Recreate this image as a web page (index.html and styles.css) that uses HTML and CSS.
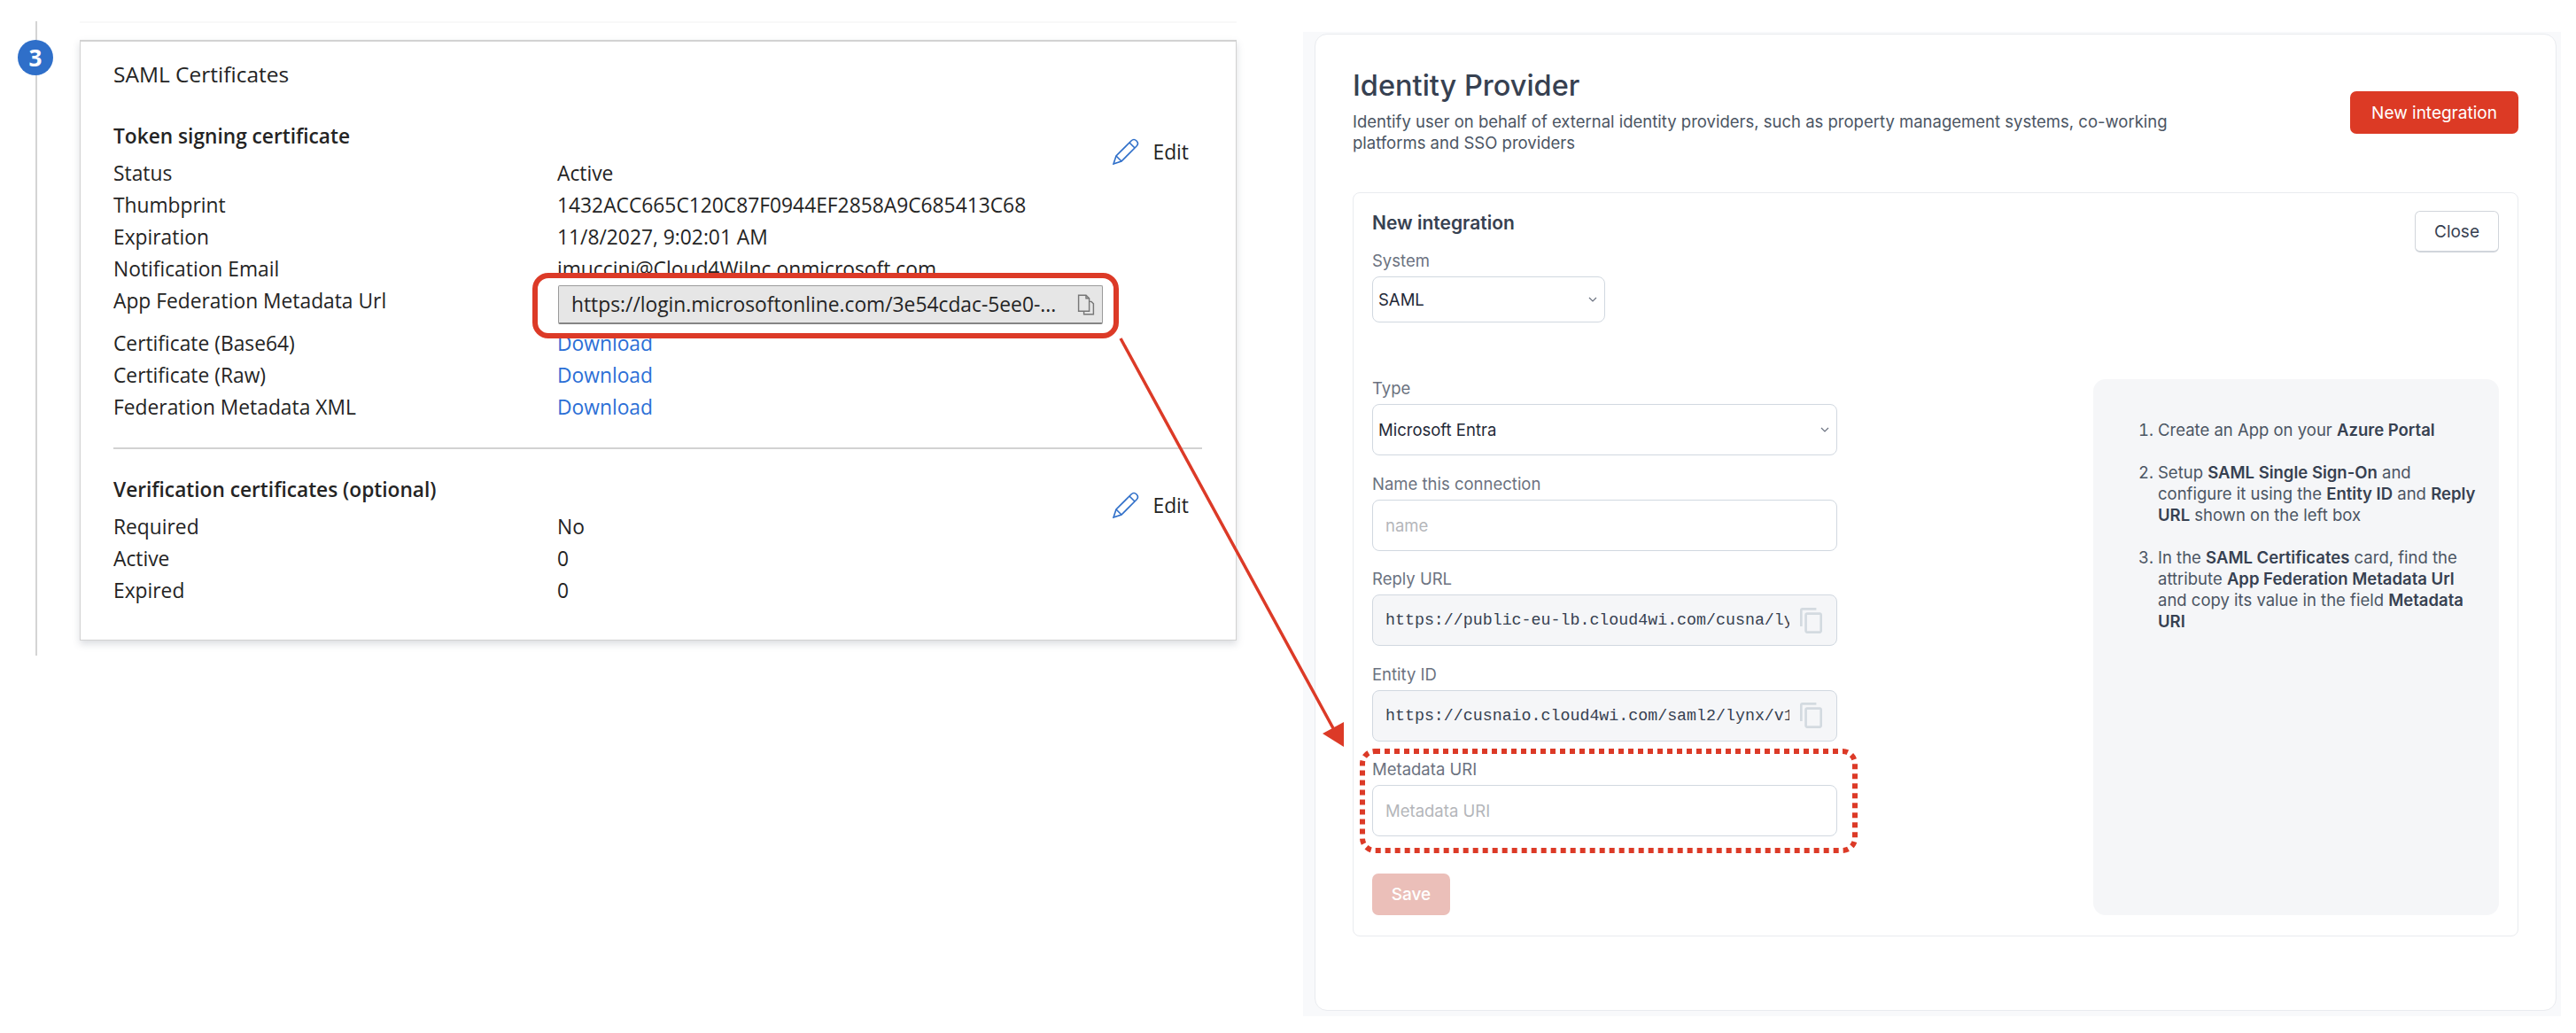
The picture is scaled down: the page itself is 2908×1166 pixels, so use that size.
FILE: index.html
```html
<!DOCTYPE html>
<html lang="en">
<head>
    <meta charset="UTF-8">
    <title>SAML setup - step 3</title>
    <link rel="stylesheet" href="styles.css">
</head>
<body>
    <div class="page">
        <!-- Left: Azure portal capture -->
        <section class="step">
            <span class="step-badge">3</span>
            <div class="step-rule"></div>
            <div class="azure-card">
                <h2 class="azure-title">SAML Certificates</h2>

                <div class="azure-section">
                    <div class="azure-main">
                        <h3 class="azure-heading">Token signing certificate</h3>
                        <div class="azure-rows">
                            <div>Status</div><div>Active</div>
                            <div>Thumbprint</div><div>1432ACC665C120C87F0944EF2858A9C685413C68</div>
                            <div>Expiration</div><div>11/8/2027, 9:02:01 AM</div>
                            <div>Notification Email</div><div>jmuccini@Cloud4WiInc.onmicrosoft.com</div>
                            <div class="tall-row">App Federation Metadata Url</div>
                            <div class="tall-row callout-cell">
                                <div class="callout">
                                    <div class="copy-field">
                                        <span class="copy-text">https://login.microsoftonline.com/3e54cdac-5ee0-...</span>
                                        <svg class="doc-icon" viewBox="0 0 16 20" fill="none" stroke="#777" stroke-width="1.2">
                                            <path d="M1 1h7l3 3v12H1z"/>
                                            <path d="M8 1v3h3M11 7h2l2 2v10H6v-3"/>
                                        </svg>
                                    </div>
                                </div>
                            </div>
                            <div>Certificate (Base64)</div><div><a href="#">Download</a></div>
                            <div>Certificate (Raw)</div><div><a href="#">Download</a></div>
                            <div>Federation Metadata XML</div><div><a href="#">Download</a></div>
                        </div>
                    </div>
                    <div class="azure-edit">
                        <svg class="pencil" viewBox="0 0 30 30" fill="none" stroke="#2f6fc9" stroke-width="1.6">
                            <path d="M1 29l3-9L21 3c2-2 4-2 6 0s2 4 0 6L10 26z"/>
                            <path d="M4 20l6 6M19 5l6 6"/>
                        </svg>
                        <span>Edit</span>
                    </div>
                </div>

                <hr class="azure-divider">

                <div class="azure-section">
                    <div class="azure-main">
                        <h3 class="azure-heading">Verification certificates (optional)</h3>
                        <div class="azure-rows">
                            <div>Required</div><div>No</div>
                            <div>Active</div><div>0</div>
                            <div>Expired</div><div>0</div>
                        </div>
                    </div>
                    <div class="azure-edit">
                        <svg class="pencil" viewBox="0 0 30 30" fill="none" stroke="#2f6fc9" stroke-width="1.6">
                            <path d="M1 29l3-9L21 3c2-2 4-2 6 0s2 4 0 6L10 26z"/>
                            <path d="M4 20l6 6M19 5l6 6"/>
                        </svg>
                        <span>Edit</span>
                    </div>
                </div>
            </div>
        </section>

        <!-- Right: our console -->
        <section class="panel">
            <div class="panel-card">
                <header class="panel-head">
                    <div>
                        <h1 class="panel-title">Identity Provider</h1>
                        <p class="panel-sub">Identify user on behalf of external identity providers, such as property management systems, co-working platforms and SSO providers</p>
                    </div>
                    <button class="btn-primary">New integration</button>
                </header>

                <div class="form-card">
                    <div class="form-head">
                        <h2 class="form-title">New integration</h2>
                        <button class="btn-close">Close</button>
                    </div>

                    <div class="field-label">System</div>
                    <div class="select select-small">
                        <span>SAML</span>
                        <svg class="chevron" viewBox="0 0 10 6" fill="none" stroke="#6b7280" stroke-width="1.2"><path d="M1 1l4 4 4-4"/></svg>
                    </div>

                    <div class="form-body">
                        <div class="form-fields">
                            <div class="field">
                                <div class="field-label">Type</div>
                                <div class="select">
                                    <span>Microsoft Entra</span>
                                    <svg class="chevron" viewBox="0 0 10 6" fill="none" stroke="#6b7280" stroke-width="1.2"><path d="M1 1l4 4 4-4"/></svg>
                                </div>
                            </div>
                            <div class="field">
                                <div class="field-label">Name this connection</div>
                                <div class="input placeholder">name</div>
                            </div>
                            <div class="field">
                                <div class="field-label">Reply URL</div>
                                <div class="input readonly">
                                    <span class="mono">https://public-eu-lb.cloud4wi.com/cusna/lynx/v1/saml/acs</span>
                                    <svg class="copy-icon" viewBox="2 1 19 22" fill="#d3dae0"><path d="M16 1H4c-1.1 0-2 .9-2 2v14h2V3h12V1zm3 4H8c-1.1 0-2 .9-2 2v14c0 1.1.9 2 2 2h11c1.1 0 2-.9 2-2V7c0-1.1-.9-2-2-2zm0 16H8V7h11v14z"/></svg>
                                </div>
                            </div>
                            <div class="field">
                                <div class="field-label">Entity ID</div>
                                <div class="input readonly">
                                    <span class="mono">https://cusnaio.cloud4wi.com/saml2/lynx/v1/metadata</span>
                                    <svg class="copy-icon" viewBox="2 1 19 22" fill="#d3dae0"><path d="M16 1H4c-1.1 0-2 .9-2 2v14h2V3h12V1zm3 4H8c-1.1 0-2 .9-2 2v14c0 1.1.9 2 2 2h11c1.1 0 2-.9 2-2V7c0-1.1-.9-2-2-2zm0 16H8V7h11v14z"/></svg>
                                </div>
                            </div>
                            <div class="field">
                                <div class="field-label">Metadata URI</div>
                                <div class="input placeholder">Metadata URI</div>
                            </div>
                            <button class="btn-save">Save</button>
                        </div>

                        <aside class="hint">
                            <ol class="hint-list">
                                <li>Create an App on your <b>Azure Portal</b></li>
                                <li>Setup <b>SAML Single Sign-On</b> and configure it using the <b>Entity ID</b> and <b>Reply URL</b> shown on the left box</li>
                                <li>In the <b>SAML Certificates</b> card, find the attribute <b>App Federation Metadata Url</b> and copy its value in the field <b>Metadata URI</b></li>
                            </ol>
                        </aside>
                    </div>
                </div>
            </div>
        </section>

        <!-- Annotations drawn over both captures -->
        <svg class="annotations" viewBox="0 0 2908 1166" fill="none">
            <path d="M1265 382L1505 822" stroke="#dc3a27" stroke-width="3.5"/>
            <path d="M1517 843L1493 828L1517 815z" fill="#dc3a27"/>
            <rect x="1538" y="848" width="556" height="112" rx="14" stroke="#dc3a27" stroke-width="6" stroke-dasharray="6 5"/>
        </svg>
    </div>
</body>
</html>
```

FILE: styles.css
```css
* {
    box-sizing: border-box;
}

body {
    margin: 0;
    background: #fff;
}

.page {
    position: relative;
    display: flex;
    align-items: flex-start;
    width: 2908px;
    height: 1166px;
    overflow: hidden;
}

/* Left capture */
.step {
    position: relative;
    width: 1357px;
    height: 716px;
    margin: 24px 0 0 40px;
    padding: 21px 0 0 48px;
    border-left: 2px solid #d4d4d4;
    font-family: "Open Sans", sans-serif;
    color: #242424;
}

.step-badge {
    position: absolute;
    top: 21px;
    left: -22px;
    width: 40px;
    height: 40px;
    border-radius: 50%;
    background: #2f6fc9;
    color: #fff;
    font-size: 26px;
    font-weight: 700;
    line-height: 40px;
    text-align: center;
}

.step-rule {
    position: absolute;
    top: 0;
    left: 48px;
    width: 1306px;
    height: 2px;
    background: #f8f8f8;
}

.azure-card {
    width: 1306px;
    height: 678px;
    padding: 21px 38px 0 37px;
    background: #fff;
    border: 1px solid #d2d2d2;
    border-top-width: 2px;
    box-shadow: 0 4px 8px rgba(90, 100, 120, 0.22);
}

.azure-title {
    margin: 0 0 39px;
    font-size: 24.5px;
    font-weight: 400;
    line-height: 32px;
}

.azure-section {
    display: flex;
    justify-content: space-between;
}

.azure-main {
    flex: 1;
}

.azure-heading {
    margin: 0 0 9px;
    font-size: 22.7px;
    font-weight: 600;
    line-height: 30px;
}

.azure-rows {
    display: grid;
    grid-template-columns: 501px 1fr;
    font-size: 22.8px;
    line-height: 36px;
}

.tall-row {
    height: 48px;
}

.azure-rows a {
    color: #2b6fd6;
    text-decoration: none;
}

.callout-cell {
    position: relative;
}

.callout {
    position: absolute;
    top: -14px;
    left: -28px;
    width: 662px;
    height: 74px;
    padding: 8px 12px 10px 23px;
    background: #fff;
    border: 6px solid #dc3a27;
    border-radius: 18px;
}

.copy-field {
    display: flex;
    align-items: center;
    justify-content: space-between;
    height: 44px;
    padding: 0 8px 0 14px;
    background: #e6e6e6;
    border: 1px solid #9a9a9a;
    border-bottom: 2px solid #858585;
    border-radius: 2px;
    line-height: 40px;
    white-space: nowrap;
}

.doc-icon {
    width: 20px;
    height: 24px;
}

.azure-edit {
    display: flex;
    align-items: center;
    gap: 16px;
    height: 32px;
    margin-top: 16px;
    padding-right: 15px;
    font-size: 22.8px;
}

.pencil {
    width: 30px;
    height: 30px;
}

.azure-divider {
    height: 2px;
    margin: 27px 0 31px;
    background: #d2d2d2;
    border: 0;
}

/* Right capture */
.panel {
    margin: 36px 0 0 74px;
    width: 1420px;
    padding: 2px 5px 6px 13px;
    background: #f8f9fb;
    font-family: Inter, sans-serif;
    color: #374151;
}

.panel-card {
    height: 1103px;
    padding: 40px 42px 0;
    background: #fff;
    border: 1px solid #e9ebef;
    border-radius: 14px;
}

.panel-head {
    display: flex;
    justify-content: space-between;
    align-items: flex-start;
    height: 138px;
}

.panel-title {
    margin: 0 0 10px;
    font-size: 32.5px;
    font-weight: 500;
    line-height: 36px;
}

.panel-sub {
    width: 950px;
    margin: 0;
    font-size: 18.5px;
    line-height: 24px;
    color: #4b5563;
}

.btn-primary {
    width: 190px;
    height: 48px;
    margin-top: 24px;
    background: #dc3a25;
    border: 0;
    border-radius: 7px;
    color: #fff;
    font-family: Inter, sans-serif;
    font-size: 19px;
}

.form-card {
    height: 840px;
    padding: 20px 21px 0;
    border: 1px solid #e9ebef;
    border-radius: 8px;
}

.form-head {
    display: flex;
    justify-content: space-between;
    align-items: flex-start;
    height: 46px;
}

.form-title {
    margin: 0;
    font-size: 21px;
    font-weight: 600;
    line-height: 28px;
}

.btn-close {
    flex: none;
    width: 95px;
    height: 47px;
    background: #fff;
    border: 1px solid #d1d5db;
    border-bottom-width: 2px;
    border-radius: 6px;
    color: #374151;
    font-family: Inter, sans-serif;
    font-size: 19px;
}

.field-label {
    height: 20px;
    margin-bottom: 8px;
    font-size: 18.5px;
    line-height: 20px;
    color: #6b7280;
}

.select {
    display: flex;
    justify-content: space-between;
    align-items: center;
    height: 58px;
    padding: 0 8px 0 6px;
    border: 1px solid #d1d8e0;
    border-radius: 8px;
    font-size: 18.5px;
    color: #1f2937;
}

.select-small {
    width: 263px;
    height: 52px;
}

.chevron {
    width: 10px;
    height: 6px;
}

.form-body {
    display: flex;
    justify-content: space-between;
    margin-top: 64px;
}

.form-fields {
    width: 525px;
}

.field {
    margin-bottom: 21.5px;
}

.input {
    display: flex;
    align-items: center;
    height: 58px;
    padding: 0 14px;
    border: 1px solid #d1d8e0;
    border-radius: 8px;
    font-size: 18.5px;
}

.placeholder {
    color: #b4b6ba;
}

.readonly {
    gap: 12px;
    padding-right: 16px;
    background: #f5f6f8;
}

.mono {
    flex: 1;
    overflow: hidden;
    font-family: "Liberation Mono", monospace;
    font-size: 18.3px;
    color: #374151;
    white-space: nowrap;
}

.copy-icon {
    flex: none;
    width: 25px;
    height: 29px;
}

.btn-save {
    display: block;
    width: 88px;
    height: 47px;
    margin-top: 42px;
    background: #ebbfb9;
    border: 0;
    border-radius: 7px;
    color: #fff;
    font-family: Inter, sans-serif;
    font-size: 19px;
    font-weight: 500;
}

.hint {
    width: 458px;
    height: 605px;
    padding: 45px 24px 0 52px;
    background: #f5f6f8;
    border-radius: 14px;
}

.hint-list {
    margin: 0;
    padding: 0 0 0 21px;
    font-size: 18.5px;
    line-height: 24px;
    color: #4b5563;
}

.hint-list li {
    margin-bottom: 24px;
}

.hint-list b {
    font-weight: 600;
    color: #374151;
}

/* Annotation layer */
.annotations {
    position: absolute;
    top: 0;
    left: 0;
    width: 2908px;
    height: 1166px;
    pointer-events: none;
}
```
